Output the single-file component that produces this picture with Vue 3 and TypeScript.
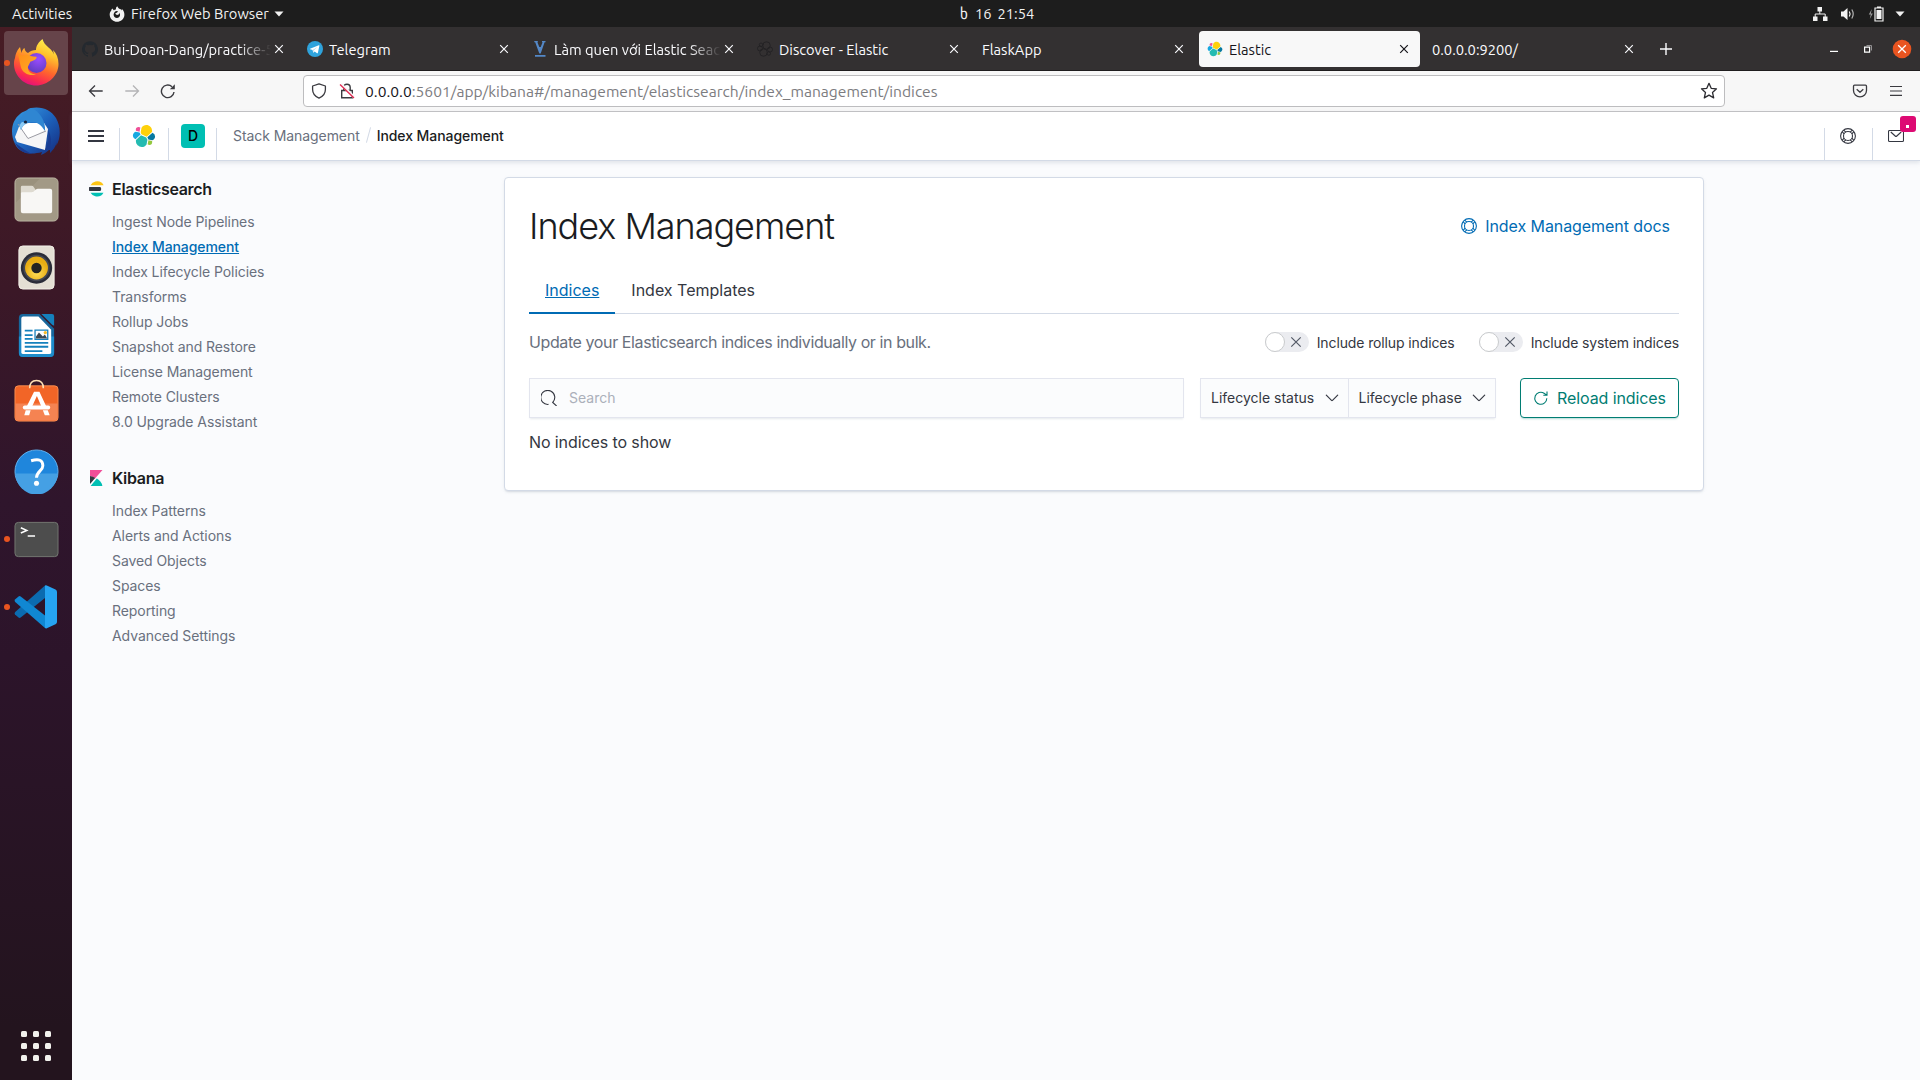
<script setup lang="ts">
interface Tab {
  title: string
  icon?: 'github' | 'telegram' | 'viblo' | 'cluster' | 'elastic'
  active?: boolean
  faded?: boolean
}

const tabs: Tab[] = [
  { title: 'Bui-Doan-Dang/practice-5', icon: 'github', faded: true },
  { title: 'Telegram', icon: 'telegram' },
  { title: 'Làm quen với Elastic Seac', icon: 'viblo', faded: true },
  { title: 'Discover - Elastic', icon: 'cluster' },
  { title: 'FlaskApp' },
  { title: 'Elastic', icon: 'elastic', active: true },
  { title: '0.0.0.0:9200/' },
]

interface NavSection {
  name: string
  logo: 'es' | 'kb'
  items: string[]
}

const sections: NavSection[] = [
  {
    name: 'Elasticsearch',
    logo: 'es',
    items: [
      'Ingest Node Pipelines',
      'Index Management',
      'Index Lifecycle Policies',
      'Transforms',
      'Rollup Jobs',
      'Snapshot and Restore',
      'License Management',
      'Remote Clusters',
      '8.0 Upgrade Assistant',
    ],
  },
  {
    name: 'Kibana',
    logo: 'kb',
    items: ['Index Patterns', 'Alerts and Actions', 'Saved Objects', 'Spaces', 'Reporting', 'Advanced Settings'],
  },
]

const current = 'Index Management'
const toggles = ['Include rollup indices', 'Include system indices']
const filters = ['Lifecycle status', 'Lifecycle phase']
</script>

<template>
  <div class="desktop">
    <svg class="defs" width="0" height="0" aria-hidden="true">
      <symbol id="elastic" viewBox="0 0 32 32">
        <path fill="#fed10a" d="M12.58 13.787l7.002 3.211 7.066-6.213a7.85 7.85 0 0 0 .152-1.557c0-4.287-3.464-7.781-7.722-7.781-2.552 0-4.931 1.27-6.368 3.39l-1.176 6.116z" />
        <path fill="#24bbb1" d="M5.333 21.215c-.1.51-.15 1.03-.15 1.57 0 4.314 3.495 7.825 7.79 7.825 2.583 0 4.984-1.285 6.427-3.434l1.167-6.107-1.557-2.99-7.028-3.215z" />
        <path fill="#ef5098" d="M5.288 9.066l4.8 1.138 1.05-5.485a3.75 3.75 0 0 0-2.274-.77 3.806 3.806 0 0 0-3.794 3.811c0 .447.079.883.218 1.306z" />
        <path fill="#17a8e0" d="M4.871 10.214c-2.143.711-3.628 2.775-3.628 5.042 0 2.203 1.36 4.173 3.403 4.955l6.729-6.113-1.235-2.654z" />
        <path fill="#93c83e" d="M20.873 27.159a3.75 3.75 0 0 0 2.26.767 3.806 3.806 0 0 0 3.794-3.812c0-.44-.077-.877-.218-1.297l-4.797-1.128z" />
        <path fill="#0779a1" d="M21.848 20.522l5.281 1.24c2.142-.712 3.628-2.776 3.628-5.043a5.313 5.313 0 0 0-3.412-4.955l-6.905 6.06z" />
      </symbol>
      <symbol id="help" viewBox="0 0 16 16">
        <g fill="none" stroke="currentColor">
          <circle cx="8" cy="8" r="7.4" stroke-width="1.1" />
          <circle cx="8" cy="8" r="4.5" stroke-width="1.1" />
          <path stroke-width="1.1" d="M3.6 2.1l2.3 2M2.1 3.6l2 2.3M12.4 2.1l-2.3 2M13.9 3.6l-2 2.3M3.6 13.9l2.3-2M2.1 12.4l2-2.3M12.4 13.9l-2.3-2M13.9 12.4l-2-2.3" />
        </g>
      </symbol>
      <symbol id="cross" viewBox="0 0 16 16">
        <path fill="none" stroke="currentColor" stroke-width="1.2" d="M4.2 4.2l7.6 7.6M11.8 4.2l-7.6 7.6" />
      </symbol>
    </svg>

    <header class="topbar">
      <span class="activities">Activities</span>
      <span class="app-menu">
        <svg width="16" height="16" viewBox="0 0 16 16">
          <path fill="#f2f2f2" fill-rule="evenodd" d="M8.3.3c-1.3 1-1.500 2.100-1.300 3.300C6 3.500 5.400 4 5 4.600L3.300 2.600C2.600 3.200 2.300 4 2.200 4.800.8 6.200.5 8 .8 9.700 1.400 13.300 4.400 15.700 8 15.700s7.200-2.800 7.400-6.800c.1-2.700-.9-4.800-2.600-6l.2 1.500C12 2.900 10.200 3.100 9.400 2 9 1.500 8.700.9 8.300.3zM7.200 5c.9 0 1.400.3 2 .6-.8.8-1.500 1.500-2.900 1.700.3 1.200 1.400 1.800 2.600 1.500 1-.2 1.500-1 1.500-2 .9 1.400.9 3-.2 4.200-1.300 1.300-3.500 1.200-4.700-.1C4.100 9.400 4.300 6.500 7.200 5z" />
        </svg>
        <span class="app-name">Firefox Web Browser</span>
        <svg width="10" height="6" viewBox="0 0 10 6"><path fill="#f2f2f2" d="M.5.5h9L5 5.500z" /></svg>
      </span>
      <span class="clock"><span class="month">ხ</span><span>16</span><span>21:54</span></span>
      <span class="tray">
        <svg width="16" height="16" viewBox="0 0 16 16">
          <path fill="#f2f2f2" d="M5.500 1h4.500v4.500H5.500zM1 10.500h4.500V15H1zM11 10.500h4.500V15H11z" />
          <path fill="none" stroke="#f2f2f2" d="M7.800 5v3M3.200 11V8h10v3" />
        </svg>
        <svg width="16" height="16" viewBox="0 0 16 16">
          <path fill="#f2f2f2" d="M1 5.500h2.500L7.500 2v12l-4-3.500H1z" />
          <path fill="none" stroke="#f2f2f2" stroke-width="1.200" d="M9.300 5.500q1.600 2.500 0 5" />
          <path fill="none" stroke="#b5b5b5" stroke-width="1.200" d="M11.800 3.500q2.800 4.500 0 9" />
        </svg>
        <svg width="16" height="16" viewBox="0 0 16 16">
          <path fill="#9a9a9a" d="M3.800 3L.8 8.500h2L1.800 13l3-5.500h-2z" />
          <path fill="#f2f2f2" d="M9 .5h4V2H9zM8.500 4h5v9h-5z" />
          <path fill="none" stroke="#f2f2f2" stroke-width="1.200" d="M7 2h8v13H7z" />
        </svg>
        <svg width="10" height="6" viewBox="0 0 10 6"><path fill="#f2f2f2" d="M.5.5h9L5 5.500z" /></svg>
      </span>
    </header>

    <div class="body">
      <aside class="dock">
        <div class="tile focused running">
          <svg width="48" height="48" viewBox="0 0 48 48">
            <defs>
              <linearGradient id="ff" x1=".75" y1="0" x2=".35" y2="1">
                <stop offset="0" stop-color="#fff44f" /><stop offset=".3" stop-color="#ffc22e" />
                <stop offset=".6" stop-color="#ff6a2b" /><stop offset=".85" stop-color="#fb2a50" /><stop offset="1" stop-color="#e3117c" />
              </linearGradient>
              <radialGradient id="ffg" cx=".6" cy=".3" r=".8"><stop offset="0" stop-color="#9a4cff" /><stop offset="1" stop-color="#5b3bbb" /></radialGradient>
              <linearGradient id="ffo" x1="0" y1="0" x2="1" y2="1"><stop offset="0" stop-color="#ff8a16" /><stop offset="1" stop-color="#ffae28" /></linearGradient>
            </defs>
            <path fill="url(#ff)" d="M30.500 0c-4 3-6.500 7-6.500 11-3 0-6 1-8 3-2-1-3-2-3.500-5-1.500 1-2.500 2.500-3 5L8 8C5 11 3.500 15 3 19c-.8 2-1.200 4.500-1 7 .8 11.500 10.300 20.500 22 20.500S46.500 37 46.500 25c0-6-2-10.500-5.500-14l1 4.500c-1-3-3-5-5.500-7C33.500 6 31.500 3.500 30.500 0z" />
            <circle cx="24.500" cy="24" r="10" fill="url(#ffg)" />
            <path fill="url(#ffo)" d="M5 11c1 3 3 5 5 5.500l5-1c2 1.500 5 2 9.500 2.300 1 2.200-3 4-6 4.700l-2.500 5c-1 4 3 8 8 8-6 2-13-1-15-7-1.500-6-2-11-4-17.500z" />
          </svg>
        </div>
        <div class="tile bird">
          <svg width="50" height="50" viewBox="0 0 50 50">
            <defs><linearGradient id="tb" x1="0" y1="0" x2="1" y2="1"><stop offset="0" stop-color="#3aa0e4" /><stop offset=".5" stop-color="#1d63bd" /><stop offset="1" stop-color="#142a7c" /></linearGradient></defs>
            <path fill="url(#tb)" d="M20 1c11-2 20 2 25 10 5 9 5 20 0 28l1-4c-2 6-4 8-7 11l0-4c-3 3-6 5-9 6l1-3C20 48 9 47 4 37-1 27 0 14 9 7c3-3 7-3 8-5z" />
            <path fill="#f5f5f6" d="M9 17l24-1 4 6-3 21L6 35 4 30z" />
            <path fill="#fff" d="M8 17l10 15 17-10-2-6-15 0z" />
            <path fill="none" stroke="#9b9ba3" stroke-width="1" d="M7 17l10 14.500L35 24" />
            <path fill="#2f86d2" d="M20 1c-6 3-10 9-12 16l2 6c2-5 4-7 10-8 7 0 10 3 14 9 1-9-5-20-14-23z" />
            <path fill="#8bcaf4" d="M11 15c-2 2-3 4-1 8 1-4 4-6 7-7z" /><circle cx="14.500" cy="15" r="1.600" fill="#17233c" />
            <path fill="#193c92" d="M34 43q5-8 3-20 5 8 2 20zM4 36l10 7q4 3 8 4-12 1-18-11z" />
          </svg>
        </div>
        <div class="tile">
          <svg width="45" height="45" viewBox="0 0 46 46">
            <rect x="1" y="1" width="44" height="44" rx="4.500" fill="#9a917d" stroke="#c1baa8" />
            <path fill="#aaa28f" opacity=".5" d="M2 26L26 2h18v42H2z" />
            <path fill="#dedad0" d="M7 14v-3.500Q7 9 8.500 9H18q1.500 0 2.300 1.500L22 13v4H7z" />
            <path fill="#f8f7f5" d="M7 17q0-1.500 1.500-1.500H18q2 0 3.500-2t3.500-1.500h12q2 0 2 2v21q0 2-2 2H9q-2 0-2-2z" />
          </svg>
        </div>
        <div class="tile">
          <svg width="45" height="45" viewBox="0 0 46 46">
            <defs><radialGradient id="rb" cx=".5" cy=".7"><stop offset="0" stop-color="#ffe05a" /><stop offset="1" stop-color="#e9ad13" /></radialGradient></defs>
            <rect x="5" y="1" width="36" height="44" rx="4" fill="#e4dfd4" stroke="#f4f1ea" />
            <circle cx="23" cy="23.500" r="16" fill="#2a2c38" /><circle cx="23" cy="23.500" r="13.500" fill="#454853" />
            <circle cx="23" cy="23.500" r="11.700" fill="url(#rb)" /><circle cx="23" cy="23.500" r="5.300" fill="#232323" />
          </svg>
        </div>
        <div class="tile">
          <svg width="45" height="45" viewBox="0 0 46 46">
            <path fill="#17679c" d="M5 5q0-4 4-4h17l15 15v25q0 4-4 4H9q-4 0-4-4z" />
            <path fill="#1d8cca" d="M5 24h36v17q0 4-4 4H9q-4 0-4-4z" />
            <path fill="#fff" d="M7.500 5.500q0-2 2-2H25l13 13.500v23q0 2-2 2H9.500q-2 0-2-2z" />
            <path fill="#1581bd" d="M28 1h11q2 0 2 2v10L39 12z" />
            <path stroke="#1581bd" stroke-width="1.800" d="M11 18h8M11 22.500h8M11 26.500h8M11 30.500h24M11 34.500h24M11 39h18" />
            <path fill="#fff" stroke="#1581bd" stroke-width="1.300" d="M21.500 17.500h13v9.500h-13z" />
            <path fill="#3b4a55" d="M22.500 26v-2l3-4 4 4 2-2 2.500 4z" /><circle cx="32" cy="20" r="1.700" fill="#f6bc27" />
          </svg>
        </div>
        <div class="tile software">
          <svg width="45" height="45" viewBox="0 0 46 46">
            <rect x="1" y="7" width="44" height="36" rx="3.500" fill="#f26527" stroke="#f98d50" />
            <path fill="#f58352" d="M1.500 25h43v14q0 3.500-3.500 3.500H5q-3.500 0-3.500-3.500z" />
            <path fill="none" stroke="#ffe0b4" stroke-width="1.600" d="M16 9.500Q16 1.500 23 1.500t7 8" />
            <path fill="#fff" d="M20.500 13h5.500l7 15h-5l-4.600-10.500L18.500 28H13zM12 32h5l-1.500 5h-5zM29.500 32h5l2 5h-5z" />
            <rect x="9" y="27" width="28" height="4.200" rx="2" fill="#fff" />
          </svg>
        </div>
        <div class="tile">
          <svg width="45" height="45" viewBox="0 0 46 46">
            <circle cx="23" cy="23" r="22" fill="#1f86dc" stroke="#63b2f0" /><path fill="#45a0e4" d="M1.500 25h43a21.500 21.500 0 0 1-43 0z" />
            <path fill="none" stroke="#fff" stroke-width="3" d="M17.500 12q12-3.500 12 5c0 5-6.500 6-6.500 12.500" /><circle cx="23" cy="35" r="2.600" fill="#fff" />
          </svg>
        </div>
        <div class="tile running">
          <svg width="45" height="45" viewBox="0 0 46 46">
            <rect x="1" y="5.500" width="44" height="35" rx="3.500" fill="#4d4d4d" stroke="#747872" />
            <path fill="none" stroke="#fff" stroke-width="1.600" d="M7 11l6 2.700-6 2.700M14 19.500h7.500" />
          </svg>
        </div>
        <div class="tile running">
          <svg width="46" height="46" viewBox="0 0 46 46">
            <path fill="#0b6bb0" d="M2 30.500l3.500 3q1 .8 2.200 0L32 14V1.500L2.200 28q-1.200 1.200-.2 2.500z" />
            <path fill="#1087d2" d="M2 15.500l3.500-3q1-.8 2.200 0L32 31.500V44L2.200 18q-1.200-1.200-.2-2.500z" />
            <path fill="#26a4f2" d="M32 1.500q.8-.5 1.800 0l8.700 4q1.500.8 1.500 2.500v30q0 1.500-1.500 2.300l-8.700 4q-1 .5-1.800-.3z" />
          </svg>
        </div>
        <div class="apps"><i v-for="n in 9" :key="n" /></div>
      </aside>

      <section class="window">
        <div class="tabbar">
          <div v-for="tab in tabs" :key="tab.title" class="tab" :class="{ active: tab.active }">
            <svg v-if="tab.icon === 'elastic'" class="favicon" width="16" height="16"><use href="#elastic" /></svg>
            <svg v-else-if="tab.icon === 'github'" class="favicon" width="16" height="16" viewBox="0 0 16 16">
              <path fill="#24292f" d="M8 .2a8 8 0 0 0-2.500 15.600c.4.100.5-.2.500-.4v-1.500c-2.200.5-2.700-1-2.700-1-.4-.9-.9-1.100-.9-1.100-.7-.5.100-.5.100-.5.800.1 1.200.8 1.200.8.700 1.300 1.900.9 2.300.7.100-.5.300-.9.500-1.100-1.800-.2-3.600-.9-3.600-4 0-.9.300-1.600.8-2.100-.1-.2-.4-1 .1-2.100 0 0 .7-.2 2.200.8a7.500 7.500 0 0 1 4 0c1.500-1 2.200-.8 2.200-.8.400 1.100.2 1.900.1 2.100.5.600.8 1.300.8 2.100 0 3.100-1.900 3.800-3.700 4 .3.300.6.800.6 1.500v2.200c0 .2.100.5.500.4A8 8 0 0 0 8 .2z" />
            </svg>
            <svg v-else-if="tab.icon === 'telegram'" class="favicon" width="16" height="16" viewBox="0 0 16 16">
              <circle cx="8" cy="8" r="8" fill="#2fa3dc" /><path fill="#fff" d="M3 7.700l8.800-3.500q.8-.2.600.6l-1.500 7q-.2.800-.9.400L7.700 10.500 6.600 11.600q-.4.300-.5-.3L5.600 9 3.100 8.200q-.5-.2-.1-.5z" /><path fill="#b9dcf0" d="M5.600 9l4.700-3-3.500 3.500-.3 2z" />
            </svg>
            <svg v-else-if="tab.icon === 'viblo'" class="favicon" width="16" height="16" viewBox="0 0 16 16">
              <path fill="#5488c7" d="M2.300 0h3.500v1.200H5.400L8 7.800l2.600-6.600H10V0h3.500v1.200h-.9L8.700 12.500H7.300L3.200 1.200h-.9zM5.500 6h5L8 12.500zM3 14h10.500v1.800H3z" />
            </svg>
            <svg v-else-if="tab.icon === 'cluster'" class="favicon" width="16" height="16" viewBox="0 0 32 32">
              <g fill="none" stroke="#222124" stroke-width="1.800">
                <circle cx="19" cy="9" r="7.500" /><circle cx="13" cy="23" r="7.500" /><circle cx="8" cy="7.500" r="3.500" /><circle cx="6" cy="15" r="5" /><circle cx="26" cy="17" r="5" /><circle cx="23.500" cy="25" r="3.500" />
              </g>
            </svg>
            <span class="tab-title" :class="{ faded: tab.faded }">{{ tab.title }}</span>
            <svg class="tab-close" width="16" height="16"><use href="#cross" /></svg>
          </div>
          <svg class="new-tab" width="16" height="16" viewBox="0 0 16 16"><path stroke="#fbfbfe" stroke-width="1.400" d="M8 2v12M2 8h12" /></svg>
          <div class="controls">
            <svg width="20" height="20" viewBox="0 0 20 20"><path stroke="#fff" stroke-width="1.200" d="M6 12.400h8" /></svg>
            <svg width="20" height="20" viewBox="0 0 20 20"><path fill="none" stroke="#929092" d="M8.500 6.500h5v5" /><path fill="none" stroke="#fff" stroke-width="1.200" d="M6.600 8.100h5v5h-5z" /></svg>
            <svg width="20" height="20" viewBox="0 0 20 20"><circle cx="10" cy="10" r="9.300" fill="#e95420" /><path stroke="#fff" stroke-width="1.300" d="M6.200 6.200l7.600 7.600M13.800 6.200l-7.600 7.600" /></svg>
          </div>
        </div>

        <div class="navbar">
          <div class="nav-buttons">
            <svg width="16" height="16" viewBox="0 0 16 16"><path fill="none" stroke="#3b3b40" stroke-width="1.300" d="M14.700 8H1.500M7 2.500L1.500 8 7 13.500" /></svg>
            <svg width="16" height="16" viewBox="0 0 16 16"><path fill="none" stroke="#b4b4b6" stroke-width="1.300" d="M1.300 8h13.200M9 2.500L14.500 8 9 13.500" /></svg>
            <svg width="16" height="16" viewBox="0 0 16 16"><path fill="none" stroke="#3b3b40" stroke-width="1.400" d="M14 9a6.300 6.300 0 1 1-2-5.300" /><path fill="#3b3b40" d="M14.800 1.200v5H9.800z" /></svg>
          </div>
          <div class="urlbar">
            <svg width="16" height="16" viewBox="0 0 16 16"><path fill="none" stroke="#3b3b40" stroke-width="1.300" stroke-linejoin="round" d="M8 .8L1.600 3v3.500c0 4 2.500 7 6.400 8.700 3.900-1.700 6.400-4.700 6.400-8.700V3z" /></svg>
            <svg class="lock" width="16" height="16" viewBox="0 0 16 16"><path fill="none" stroke="#3b3b40" stroke-width="1.400" d="M4.800 7.500V4.500Q4.800 1.200 8 1.200t3.200 3.300v3M2.700 7.500h10.600v7.300H2.700z" /><path stroke="#f7f7f7" stroke-width="2.500" d="M2 1l13 13" /><path stroke="#e22850" stroke-width="1.300" d="M1 1.500l14 13.500" /></svg>
            <span class="url"><b>0.0.0.0</b>:5601/app/kibana#/management/elasticsearch/index_management/indices</span>
            <svg class="star" width="18" height="18" viewBox="0 0 18 18"><path fill="none" stroke="#2b2b30" stroke-width="1.300" stroke-linejoin="round" d="M9 1.300l2.200 5 5.300.5-4 3.600 1.200 5.500L9 13.100l-4.700 2.800 1.200-5.500-4-3.600 5.300-.5z" /></svg>
          </div>
          <div class="nav-right">
            <svg width="16" height="16" viewBox="0 0 16 16"><path fill="none" stroke="#3b3b40" stroke-width="1.300" stroke-linejoin="round" d="M2.500 2.200h11q1 0 1 1v4.300a6.500 6.300 0 0 1-13 0V3.200q0-1 1-1zM4.700 6.200L8 9.200l3.300-3" /></svg>
            <svg width="16" height="16" viewBox="0 0 16 16"><path stroke="#3b3b40" stroke-width="1.200" d="M2 3.500h12M2 8h12M2 12.400h12" /></svg>
          </div>
        </div>

        <div class="kbn-header">
          <div class="cell menu"><svg width="16" height="12" viewBox="0 0 16 12"><path stroke="#343741" stroke-width="2" d="M0 1h16M0 6h16M0 11h16" /></svg></div>
          <div class="cell logo"><svg width="24" height="24"><use href="#elastic" /></svg></div>
          <div class="cell space"><span class="avatar">D</span></div>
          <nav class="crumbs"><span class="crumb">Stack Management</span><i /><span class="crumb last">Index Management</span></nav>
          <div class="cell right help"><svg width="16" height="16"><use href="#help" /></svg></div>
          <div class="cell right mail">
            <svg width="16" height="16" viewBox="0 0 16 16"><path fill="none" stroke="#343741" stroke-width="1.100" d="M1.500 2.500h13q1 0 1 1v9q0 1-1 1h-13q-1 0-1-1v-9q0-1 1-1zM2.800 4l4.400 4q.8.700 1.600 0l4.400-4" /></svg>
            <span class="badge"><i /></span>
          </div>
        </div>

        <div class="page">
          <nav class="sidenav">
            <div v-for="section in sections" :key="section.name" class="section">
              <div class="section-head">
                <svg v-if="section.logo === 'es'" width="16" height="16" viewBox="0 0 16 16">
                  <path fill="#fec514" d="M1.500 4.200A7.900 7.900 0 0 1 12.500 1.600Q14 2.700 14.600 4.200z" />
                  <path fill="#343741" d="M.2 6H11q1.200 0 1.200 2T11 10H.2Q-.2 8 .2 6z" />
                  <path fill="#00bfb3" d="M1.500 11.700h13q-.9 1.700-2.300 2.800A7.900 7.900 0 0 1 1.500 11.700z" />
                </svg>
                <svg v-else width="16" height="16" viewBox="0 0 16 16">
                  <path fill="#f04e98" d="M1 0h12.500L6 8.500Q4 6.500 1 6z" /><path fill="#343741" d="M1 6q3.200.3 5.200 2L1 14z" /><path fill="#00bfb3" d="M7.800 8.500Q12.500 11 13.400 16H1.600z" />
                </svg>
                <span>{{ section.name }}</span>
              </div>
              <a v-for="item in section.items" :key="item" class="item" :class="{ selected: item === current }">{{ item }}</a>
            </div>
          </nav>

          <main class="panel">
            <div class="title-row">
              <h1>Index Management</h1>
              <a class="docs"><svg width="16" height="16"><use href="#help" /></svg><span>Index Management docs</span></a>
            </div>
            <div class="tabs"><a class="tab-item on"><span>Indices</span></a><a class="tab-item"><span>Index Templates</span></a></div>
            <div class="intro">
              <p>Update your Elasticsearch indices individually or in bulk.</p>
              <label v-for="t in toggles" :key="t" class="switch">
                <span class="track"><i class="thumb" /><svg width="16" height="16" viewBox="0 0 16 16"><path stroke="#535966" stroke-width="1.200" d="M3.300 3.300l9.400 9.400M12.700 3.300l-9.400 9.400" /></svg></span>
                <span>{{ t }}</span>
              </label>
            </div>
            <div class="tools">
              <div class="search">
                <svg width="16" height="16" viewBox="0 0 16 16"><path fill="none" stroke="#343741" stroke-width="1.100" d="M7.500 14.400A7 7 0 1 1 11.700 12.400L15.600 16M11.700 12.400l1-1" /></svg>
                <span>Search</span>
              </div>
              <div class="filters">
                <div v-for="f in filters" :key="f" class="filter">
                  <span>{{ f }}</span>
                  <svg width="16" height="16" viewBox="0 0 16 16"><path fill="none" stroke="#343741" stroke-width="1.200" stroke-linecap="round" d="M2.300 5.200L7.500 10.400q.5.400 1 0L13.700 5.200" /></svg>
                </div>
              </div>
              <button class="reload">
                <svg width="16" height="16" viewBox="0 0 16 16"><path fill="none" stroke="#017d73" stroke-width="1.100" d="M13.800 8.300A6 6 0 1 1 11 3.200l2.800 1.900M14 1.500v3.700h-3.700" /></svg>
                <span>Reload indices</span>
              </button>
            </div>
            <p class="empty">No indices to show</p>
          </main>
        </div>
      </section>
    </div>
  </div>
</template>

<style>
body { margin: 0; overflow: hidden; }
</style>

<style scoped>
.desktop { display: flex; flex-direction: column; width: 1920px; height: 1080px; overflow: hidden; font-family: "Ubuntu", "Noto Sans", sans-serif; font-size: 14.667px; }
.desktop * { box-sizing: border-box; }
.defs { position: absolute; }
svg { display: block; flex: none; }

.topbar { display: flex; align-items: center; height: 27px; background: #1d1d1d; color: #f2f2f2; white-space: nowrap; }
.activities { width: 97px; padding-left: 12px; }
.app-menu { display: flex; align-items: center; width: 863px; padding-left: 12px; }
.app-name { width: 138px; margin: 0 5px 0 6px; }
.clock { display: flex; width: 852px; gap: 6px; }
.clock .month { width: 9px; }
.tray { display: flex; align-items: center; gap: 12px; }
.tray svg:last-child { margin-left: -1px; }

.body { display: flex; flex: 1; min-height: 0; }
.dock { display: flex; flex-direction: column; gap: 4px; width: 72px; padding: 4px; background: linear-gradient(#471c24, #3b1827 25%, #2f152c 45%, #2c142a 60%, #23141e 95%); }
.tile { position: relative; display: flex; align-items: center; justify-content: center; height: 64px; border-radius: 4px; }
.focused { background: #66444a; }
.bird { padding-top: 1px; }
.software { padding-bottom: 3px; }
.running::before { content: ""; position: absolute; left: 0; top: 29px; width: 6px; height: 6px; border-radius: 50%; background: #e95420; }
.apps { display: grid; grid-template-columns: repeat(3, 6px); gap: 6px; justify-content: center; margin: auto 0 15px; }
.apps i { height: 6px; border-radius: 1.500px; background: #f2f2ee; }

.window { display: flex; flex-direction: column; flex: 1; min-width: 0; background: #fafbfd; }
.tabbar { display: flex; align-items: center; gap: 4px; height: 44px; padding: 0 8px 0 2px; background: #333031; border-bottom: 1px solid #1f1d1e; }
.tab { display: flex; align-items: center; width: 221px; height: 36px; margin-top: 1px; padding: 0 8px; border-radius: 4px; color: #fbfbfe; }
.tab.active { background: #f8f8f8; color: #15141a; }
.favicon { margin-right: 6px; }
.tab-title { flex: 1; min-width: 0; padding-top: 1px; overflow: hidden; white-space: nowrap; line-height: 24px; }
.faded { mask-image: linear-gradient(90deg, #000 calc(100% - 32px), transparent); }
.tab-close { margin-top: -1px; }
.new-tab { margin-left: 9px; }
.controls { display: flex; gap: 14px; margin-left: auto; }

.navbar { display: flex; align-items: center; height: 41px; background: #f7f7f7; border-bottom: 1px solid #c2c2c4; }
.nav-buttons { display: flex; gap: 20px; width: 231px; padding-left: 16px; }
.urlbar { display: flex; align-items: center; width: 1422px; height: 32px; padding: 0 6px 0 7px; border: 1px solid #bdbdbf; border-radius: 4px; background: #fff; }
.lock { margin-left: 12px; }
.url { margin-left: 10px; color: #7c7c80; font-size: 15.6px; white-space: nowrap; }
.url b { font-weight: 400; color: #15141a; }
.star { margin-left: auto; }
.nav-right { display: flex; gap: 20px; margin-left: auto; padding-right: 16px; }

.kbn-header { position: relative; z-index: 1; display: flex; align-items: center; height: 49px; background: #fff; border-bottom: 1px solid #d3dae6; box-shadow: 0 2px 4px rgba(152, 162, 179, .25); font-family: "Inter", sans-serif; }
.cell { display: flex; height: 48px; padding-top: 12px; justify-content: center; background: linear-gradient(#d3dae6, #d3dae6) no-repeat right 16px / 1px 32px; }
.menu { width: 48px; padding-top: 18px; }
.logo { width: 49px; padding-right: 2px; }
.space { width: 48px; }
.avatar { width: 24px; height: 24px; border-radius: 4px; background: #00bfb3; color: #000; font-size: 14px; font-weight: 500; line-height: 24px; text-align: center; }
.crumbs { display: flex; align-items: center; flex: 1; padding: 0 0 2px 16px; font-size: 14px; color: #69707d; letter-spacing: -.07px; }
.crumbs i { width: 1px; height: 16px; margin: 0 8px; background: #d3dae6; transform: rotate(15deg); }
.last { color: #1a1c21; font-weight: 500; }
.right { position: relative; width: 48px; padding-top: 16px; background-position: left 16px; color: #343741; }
.badge { position: absolute; right: 4px; top: 4px; display: flex; width: 16px; height: 16px; border-radius: 3px; background: #dd0a73; align-items: center; justify-content: center; }
.badge i { width: 3px; height: 3px; margin-top: 4px; margin-right: 1px; background: #fff; }

.page { display: flex; flex: 1; align-items: flex-start; font-family: "Inter", sans-serif; }
.sidenav { width: 432px; padding: 16px 0 0 17px; }
.section { display: flex; flex-direction: column; margin-bottom: 32px; }
.section-head { display: flex; align-items: center; gap: 7px; height: 24px; margin-bottom: 8px; font-size: 16px; font-weight: 600; color: #1a1c21; letter-spacing: -.3px; }
.item { height: 25px; padding-left: 23px; font-size: 14px; line-height: 25px; color: #69707d; letter-spacing: -.07px; }
.selected { color: #006bb4; font-weight: 500; text-decoration: underline; }

.panel { width: 1200px; height: 314px; margin-top: 16px; padding: 24px; border: 1px solid #d3dae6; border-radius: 4px; background: #fff; box-shadow: 0 2px 2px -1px rgba(152, 162, 179, .3), 0 1px 5px -2px rgba(152, 162, 179, .3); color: #343741; }
.title-row { display: flex; align-items: center; justify-content: space-between; height: 48px; }
h1 { margin: 0; font-size: 36px; font-weight: 300; line-height: 48px; letter-spacing: -1.03px; color: #1a1c21; }
.docs { display: flex; align-items: center; gap: 8px; padding-right: 9px; font-size: 16px; color: #006bb4; letter-spacing: -.07px; }
.tabs { display: flex; height: 48px; margin-top: 16px; border-bottom: 1px solid #d3dae6; }
.tab-item { height: 48px; padding: 4px 16px 0; font-size: 16px; line-height: 40px; }
.on { border-bottom: 2px solid #006bb4; color: #006bb4; }
.on span { text-decoration: underline; }
.intro { display: flex; align-items: center; height: 24px; margin-top: 16px; font-size: 14px; }
.intro p { flex: 1; margin: 0; font-size: 16px; color: #69707d; letter-spacing: -.4px; }
.switch { display: flex; align-items: center; gap: 8px; margin-left: 24px; letter-spacing: -.12px; }
.track { display: flex; align-items: center; justify-content: space-between; width: 44px; height: 20px; padding-right: 5px; border-radius: 10px; background: #ebecf0; }
.thumb { width: 20px; height: 20px; border: 1px solid #c9cbcd; border-radius: 50%; background: #fff; }
.tools { display: flex; height: 40px; margin-top: 24px; font-size: 14px; }
.search { display: flex; align-items: center; gap: 12px; flex: 1; padding: 0 12px 0 11px; border: 1px solid #e3e5ee; background: #fbfcfd; box-shadow: 0 2px 2px -1px rgba(152, 162, 179, .25); color: #abb0ba; }
.search span, .filter span { padding-bottom: 1px; }
.filters { display: flex; width: 296px; margin: 0 24px 0 16px; border: 1px solid #e3e5ee; background: #fbfcfd; box-shadow: 0 2px 2px -1px rgba(152, 162, 179, .25); }
.filter { display: flex; flex: 1; align-items: center; justify-content: space-between; padding: 0 8px 0 10px; white-space: nowrap; }
.filter + .filter { border-left: 1px solid #e3e5ee; }
.reload { display: flex; align-items: center; justify-content: center; gap: 8px; width: 159px; padding: 0; border: 1px solid #017d73; border-radius: 4px; background: #fff; box-shadow: 0 2px 2px -1px rgba(1, 125, 115, .3); font: 400 16px "Inter", sans-serif; letter-spacing: -.1px; color: #017d73; white-space: nowrap; }
.empty { margin: 12px 0 0; font-size: 16px; line-height: 24px; letter-spacing: -.1px; }
</style>
